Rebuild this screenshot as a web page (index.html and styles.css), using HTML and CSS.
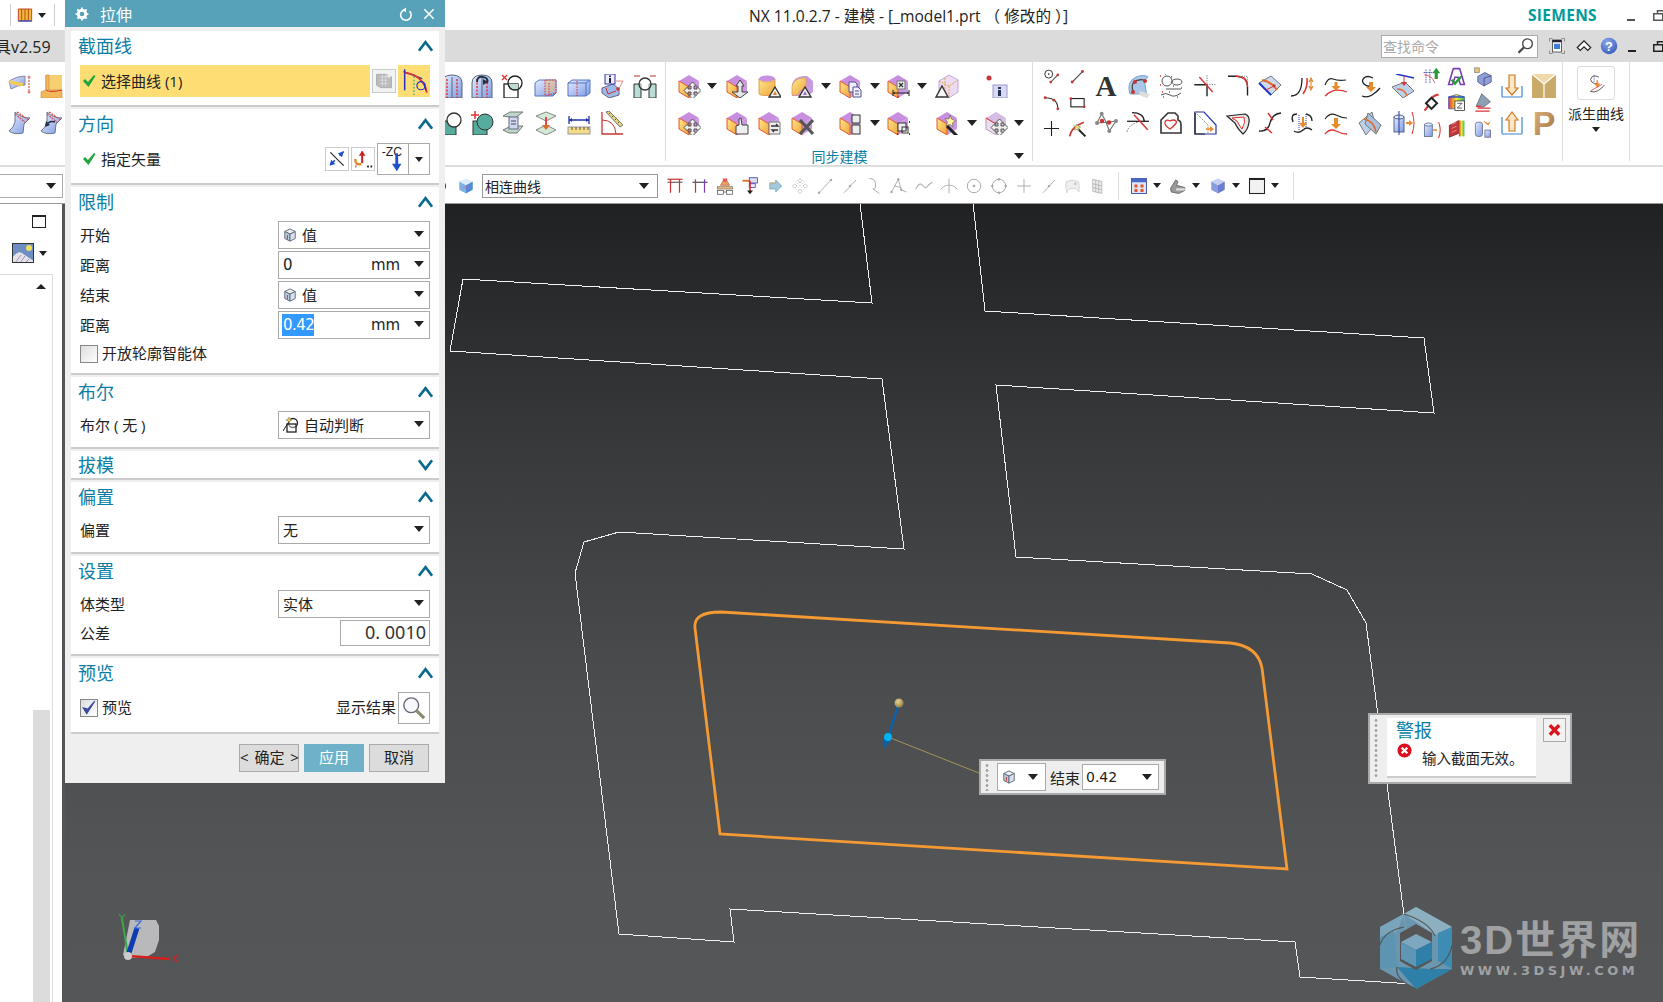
FILE: index.html
```html
<!DOCTYPE html>
<html lang="zh-CN">
<head>
<meta charset="utf-8">
<title>NX 11.0.2.7 - 建模</title>
<link rel="stylesheet" href="styles.css">
</head>
<body>
<svg class="defs" xmlns="http://www.w3.org/2000/svg">
<defs>
<linearGradient id="gy" x1="0" y1="0" x2="1" y2="1"><stop offset="0" stop-color="#ffe98a"/><stop offset="1" stop-color="#eea23c"/></linearGradient>
<linearGradient id="gb" x1="0" y1="0" x2="1" y2="1"><stop offset="0" stop-color="#e4ecff"/><stop offset="1" stop-color="#7f9be2"/></linearGradient>
<linearGradient id="gt" x1="0" y1="0" x2="1" y2="1"><stop offset="0" stop-color="#e2b884"/><stop offset="1" stop-color="#a06c38"/></linearGradient>
<linearGradient id="gr" x1="0" y1="0" x2="1" y2="0"><stop offset="0" stop-color="#e33"/><stop offset=".5" stop-color="#ee3"/><stop offset="1" stop-color="#3b5"/></linearGradient>
<radialGradient id="gball" cx=".4" cy=".35" r=".7"><stop offset="0" stop-color="#e4d596"/><stop offset="1" stop-color="#8f7c3e"/></radialGradient>
<radialGradient id="ghelp" cx=".4" cy=".3" r=".8"><stop offset="0" stop-color="#8ea9ea"/><stop offset="1" stop-color="#2f57b8"/></radialGradient>
<symbol id="cube" viewBox="0 0 24 24"><path d="M2 7l10-6 10 6-10 6z" fill="#c88fe0"/><path d="M22 7v11l-10 6V13z" fill="#c79bdf"/><path d="M2 7l10 6v11L2 18z" fill="url(#gy)" stroke="#e4572e" stroke-width="1"/></symbol>
<symbol id="move" viewBox="0 0 24 24"><path d="M15.500 8l4 4H17v3h3v-2.500l4 4-4 4V18h-3v3h2.500l-4 4-4-4H14v-3h-3v2.500l-4-4 4-4V15h3v-3h-2.500z" fill="#eee" stroke="#444" stroke-width=".9"/></symbol>
<symbol id="b1" viewBox="0 0 24 24"><use href="#cube"/><use href="#move"/></symbol>
<symbol id="b2" viewBox="0 0 24 24"><use href="#cube"/><path d="M15 6l4 6h-2v6h6l-8 6-8-6h6v-6h-2z" fill="#e6e6e6" stroke="#444"/></symbol>
<symbol id="b3" viewBox="0 0 24 24"><ellipse cx="10" cy="4.500" rx="8" ry="3" fill="#c88fe0"/><path d="M2 5v15c0 2 16 2 16 0V5c0 4-16 4-16 0z" fill="url(#gy)" stroke="#d9822b" stroke-width=".7"/><path d="M12 23l6-10 6 10z" fill="#f3f3f3" stroke="#333" stroke-width="1.400"/><path d="M16 21l2-4 2 4z" fill="#e57a2c"/></symbol>
<symbol id="b4" viewBox="0 0 24 24"><path d="M2 10q2-7 11-8h4l6 5v11l-5 4H2z" fill="#c79bdf"/><path d="M2 21v-9q3-8 11-8h3v11q-7 0-8 6z" fill="url(#gy)" stroke="#d96" stroke-width=".8"/><path d="M9 23l6-10 6 10z" fill="#eee" stroke="#333" stroke-width="1.400"/><path d="M13 21l2-4 2 4z" fill="#a66cc9"/></symbol>
<symbol id="b5" viewBox="0 0 24 24"><use href="#cube"/><path d="M11 8h6l2 2v8h-8z" fill="#eef" stroke="#558"/><path d="M15 13h5l3 3v7h-8z" fill="#eef" stroke="#558"/><path d="M17 17h4M17 20h4" stroke="#558"/></symbol>
<symbol id="b6" viewBox="0 0 24 24"><use href="#cube"/><rect x="11" y="7" width="8" height="8" fill="#eee" stroke="#777"/><path d="M13 9l4 4M17 9l-4 4" stroke="#333" stroke-width="1.300"/><path d="M7 19h16M7 16v6M23 16v6" stroke="#222"/><path d="M9 20l-2-1 2-1zM21 20l2-1-2-1z" fill="#222"/><path d="M11 23h2" stroke="#c33" stroke-width="1.500"/></symbol>
<symbol id="b7" viewBox="0 0 24 24"><path d="M4 7l10-6 9 5v12l-9 6-10-6z" fill="#ecdcf2" stroke="#c9a6d9"/><path d="M4 7l10 5 9-6M14 12v12M10 4v13" stroke="#e7a24a" fill="none" stroke-dasharray="2 1"/><path d="M1 23l6-11 6 11z" fill="#f5f5f5" stroke="#333" stroke-width="1.400"/></symbol>
<symbol id="b8" viewBox="0 0 24 24"><circle cx="5" cy="4" r="2.500" fill="#c33"/><rect x="9" y="11" width="14" height="13" fill="#d9d9f5" stroke="#99c"/><rect x="14" y="13" width="3" height="2" fill="#235"/><rect x="14" y="16" width="3" height="6" fill="#235"/></symbol>
<symbol id="b9" viewBox="0 0 24 24"><use href="#cube"/><path d="M11 23v-8l3-1V8l2-1 1 7h6v9z" fill="#eee" stroke="#444"/></symbol>
<symbol id="b10" viewBox="0 0 24 24"><use href="#cube"/><path d="M12 11h11v12H12z" fill="#eee" stroke="#777"/><path d="M14 15h7l-2-2M21 19h-6l2 2" stroke="#333" fill="none" stroke-width="1.300"/></symbol>
<symbol id="b11" viewBox="0 0 24 24"><use href="#cube"/><path d="M10 9l13 14M23 9L10 23" stroke="#555" stroke-width="3"/></symbol>
<symbol id="b12" viewBox="0 0 24 24"><use href="#cube"/><rect x="14" y="4" width="8" height="8" fill="#eee" stroke="#333"/><rect x="14" y="14" width="8" height="9" fill="#eee" stroke="#333"/></symbol>
<symbol id="b13" viewBox="0 0 24 24"><use href="#cube"/><rect x="12" y="12" width="8" height="8" fill="#eee" stroke="#333"/><rect x="16" y="16" width="6" height="6" fill="none" stroke="#333"/><path d="M11 23h1M23 23h1M23 11h1" stroke="#33a" stroke-width="2"/></symbol>
<symbol id="b14" viewBox="0 0 24 24"><use href="#cube"/><path d="M12 15l10 10" stroke="#222" stroke-width="3"/><path d="M15 4l1.500 4 4 1.500-3 2.500.5 4-3-2.500-4 1 1.500-3.500-2.500-3.500 4 .5z" fill="#fff3a0" stroke="#555" stroke-width=".6"/></symbol>
<symbol id="b15" viewBox="0 0 24 24"><path d="M2 7l10-6 10 6-10 6z" fill="#d5bce4"/><path d="M22 7v11l-10 6V13z" fill="#d8c4e6"/><path d="M2 7l10 6v11L2 18z" fill="#e9dff0" stroke="#b9a" stroke-width="1"/><path d="M2 7l10 6" stroke="#d33"/><use href="#move"/></symbol>

<symbol id="a1" viewBox="0 0 24 24"><path d="M2 24V9q0-8 10-8t10 8v15z" fill="url(#gb)" stroke="#567"/><path d="M12 3v21" stroke="#567"/><path d="M7 5v19M17 5v19" stroke="#e33" stroke-dasharray="2 1.500" stroke-width="1.500"/></symbol>
<symbol id="a2" viewBox="0 0 24 24"><use href="#a1"/><path d="M7 8q0-6 6-5t4 6" fill="none" stroke="#234" stroke-width="2"/><path d="M13 11l5-3-5-3z" fill="#234"/></symbol>
<symbol id="a3" viewBox="0 0 24 24"><rect x="3" y="10" width="14" height="14" fill="#fff" stroke="#222" stroke-width="1.300"/><rect x="8" y="10" width="9" height="6" fill="#bfdcd2"/><circle cx="14" cy="9" r="7" fill="none" stroke="#222" stroke-width="1.300"/><path d="M1 1l5 5M6 1L1 6" stroke="#d33" stroke-width="1.300"/></symbol>
<symbol id="a4" viewBox="0 0 24 24"><path d="M1 9l4-3h17v13l-3 3H1z" fill="url(#gb)" stroke="#5577c9"/><rect x="11" y="6" width="11" height="13" fill="#f4bf7a" fill-opacity=".5"/><path d="M11 6v16l11-3V6zM15 9v13" stroke="#d33" fill="none" stroke-dasharray="1.500 1.200"/></symbol>
<symbol id="a5" viewBox="0 0 24 24"><path d="M1 9l4-3h18v13l-4 3H1z" fill="url(#gb)" stroke="#5577c9"/><path d="M19 22V9l4-3M1 9h18" fill="none" stroke="#5577c9"/><path d="M10 7v15" stroke="#d33" stroke-dasharray="1.500 1.200"/></symbol>
<symbol id="a6" viewBox="0 0 24 24"><path d="M2 14l11-4 6 5v6l-10 3-7-5z" fill="#9fb8ea" stroke="#667"/><rect x="5" y="0" width="10" height="10" fill="#eef" stroke="#33a"/><rect x="9" y="1.500" width="2" height="1.500" fill="#224"/><rect x="9" y="4" width="2" height="5" fill="#224"/><path d="M15 7h8l-5 9" fill="none" stroke="#e88"/><circle cx="18" cy="15" r="1.800" fill="#c33"/><path d="M6 14l2 6 8-3" fill="none" stroke="#c33"/></symbol>
<symbol id="a7" viewBox="0 0 24 24"><path d="M1 10h7v14H1zM16 10h7v14h-7z" fill="#b9dcd6" stroke="#333"/><circle cx="12" cy="10" r="6" fill="#fff" fill-opacity=".5" stroke="#333" stroke-width="1.300"/><path d="M1 2h6M17 2h6" stroke="#c77" stroke-width="1.400"/></symbol>
<symbol id="a8" viewBox="0 0 24 24"><path d="M3 10h13v14H3z" fill="#56ad9d" stroke="#333"/><circle cx="14" cy="9" r="7" fill="#fff" stroke="#333" stroke-width="1.300"/></symbol>
<symbol id="a9" viewBox="0 0 24 24"><rect x="3" y="10" width="14" height="14" fill="#56ad9d" stroke="#333"/><circle cx="15" cy="11" r="8" fill="#56ad9d" stroke="#333"/><path d="M1 4h8M5 0v8" stroke="#d33" stroke-width="1.500"/></symbol>
<symbol id="a10" viewBox="0 0 24 24"><path d="M2 5l7-4h13l-8 6zM2 19l8-4h12l-6 7H8z" fill="#bcd8c6" stroke="#777"/><rect x="8" y="6" width="9" height="12" fill="#cfd8ee" stroke="#668"/><path d="M10 10h5M10 13h5" stroke="#446"/></symbol>
<symbol id="a11" viewBox="0 0 24 24"><path d="M2 5l10-4 10 4-10 5zM2 19l10-5 10 5-10 5z" fill="#d4ead9" stroke="#888"/><path d="M12 6v10" stroke="#e44" stroke-width="2"/><path d="M8 14h8l-4 5z" fill="#e06a2a"/></symbol>
<symbol id="a12" viewBox="0 0 24 24"><path d="M2 9h20M2 5v8M22 5v8" stroke="#2233aa" stroke-width="1.300"/><path d="M2 9l3-2v4zM22 9l-3-2v4z" fill="#2233aa"/><rect x="1" y="16" width="22" height="7" fill="#f3dd87" stroke="#999"/><path d="M5 16v3M9 16v3M13 16v3M17 16v3M21 16v3" stroke="#555"/></symbol>
<symbol id="a13" viewBox="0 0 24 24"><path d="M2 1v22h21" fill="none" stroke="#c33" stroke-width="1.300"/><path d="M2 9q13 0 14 14" fill="none" stroke="#c33"/><path d="M6 1l3-1 14 14-3 2z" fill="#e8d27a" stroke="#777"/><path d="M9 3l1-1M12 6l1-1M15 9l1-1M18 12l1-1" stroke="#555"/></symbol>

<symbol id="l1" viewBox="0 0 24 24"><path d="M1 7q8-5 16-5v9q-8 0-14 4z" fill="url(#gb)" stroke="#88a"/><path d="M1 9q6 3 14 3v-3Q8 8 1 6z" fill="#f4cb58"/><path d="M21 3v14" stroke="#c44" stroke-dasharray="2 1"/><circle cx="21" cy="3" r="1.500" fill="#d88"/><circle cx="21" cy="18" r="1.500" fill="#d88"/></symbol>
<symbol id="l2" viewBox="0 0 24 24"><rect x="5" y="1" width="17" height="15" fill="#f5cf70"/><path d="M1 24v-6q4-2 5-2V1h3v15h13v8z" fill="#f3b858" stroke="#c84" stroke-width=".6"/><path d="M6 16q4 3 16 0" stroke="#d33" fill="none"/></symbol>
<symbol id="l3" viewBox="0 0 24 24"><path d="M7 1q6 6 15 6l-6 6-1 9q-9 2-14-2 5-4 6-9z" fill="url(#gb)" stroke="#678"/><path d="M9 1l12 8M7 3l11 9" stroke="#d44" stroke-dasharray="2 1" stroke-width="1.200"/></symbol>
<symbol id="l4" viewBox="0 0 24 24"><use href="#l3"/><path d="M15 11q-6-2-9 4" stroke="#234" fill="none" stroke-width="1.600"/><path d="M6 10l-1 6 5-2z" fill="#234"/></symbol>

<symbol id="c1" viewBox="0 0 24 24"><circle cx="8.500" cy="9" r="5" fill="none" stroke="#333" stroke-width="1.200"/><circle cx="8.500" cy="9" r="1" fill="#333"/><path d="M11 19l9-9" stroke="#555" stroke-width="1.400"/><circle cx="11" cy="19" r="1.700" fill="#c33"/><circle cx="20" cy="10" r="1.700" fill="#c33"/></symbol>
<symbol id="c2" viewBox="0 0 24 24"><path d="M5.300 19L18.300 5.700" stroke="#444" stroke-width="1.400"/><circle cx="5.300" cy="19" r="1.800" fill="#c33"/><circle cx="18.300" cy="5.700" r="1.800" fill="#c33"/></symbol>
<symbol id="c3" viewBox="0 0 24 24"><path d="M4 6q16 0 16 14" fill="none" stroke="#333" stroke-width="1.400"/><circle cx="4" cy="6" r="1.800" fill="#c33"/><circle cx="15" cy="9" r="1.800" fill="#c33"/><circle cx="20" cy="20" r="1.800" fill="#c33"/></symbol>
<symbol id="c4" viewBox="0 0 24 24"><rect x="3.600" y="7" width="16.800" height="10.500" fill="#fff" stroke="#222" stroke-width="1.400"/><circle cx="3.600" cy="7" r="1.700" fill="#c33"/><circle cx="20.400" cy="17.500" r="1.700" fill="#c33"/></symbol>
<symbol id="c5" viewBox="0 0 24 24"><path d="M12 2.500v19M2.500 12h19" stroke="#222" stroke-width="1.400"/></symbol>
<symbol id="c6" viewBox="0 0 24 24"><path d="M2 22q2-12 18-18" fill="none" stroke="#c33" stroke-width="2"/><path d="M12 12l10 10" stroke="#222" stroke-width="2.500"/><path d="M11 6l2 3 3 1-2.500 2 .5 3-3-2-3 1 1-3-2-2.500 3 .5z" fill="#eedf70" stroke="#555" stroke-width=".5"/></symbol>
<symbol id="c7" viewBox="0 0 24 24"><path d="M4 20q-4-12 6-17 8-3 12 0-4 2-3 7l2 13-8-3z" fill="#a9c7e8" stroke="#7aa2d0"/><path d="M14 17l10 3-3 4-8-3z" fill="#ddd"/><path d="M7 18q-3-11 6-12 4-1 6 1" fill="none" stroke="#444" stroke-width="1.300"/><circle cx="7" cy="18" r="2" fill="#c33"/><circle cx="9" cy="8" r="2" fill="#c33"/><circle cx="19" cy="7" r="2" fill="#c33"/></symbol>
<symbol id="c8" viewBox="0 0 24 24"><circle cx="8" cy="7" r="5" fill="none" stroke="#555"/><ellipse cx="18" cy="8" rx="5" ry="3" fill="none" stroke="#555"/><path d="M7 15h15M2 21q5-3 9 0t11-2" fill="none" stroke="#555"/><path d="M1 2h1M6 0h1M12 3h1M1 11h1M14 12h1M22 14h1M3 18h1M10 18h1M18 23h1M4 23h1" stroke="#d33" stroke-width="1.500"/></symbol>
<symbol id="c9" viewBox="0 0 24 24"><path d="M1.300 10.700H14V22.300" fill="none" stroke="#222" stroke-width="1.400"/><path d="M6.300 3l13.400 15" stroke="#d33" stroke-width="1.400"/><path d="M14 10.700h9M14 1.300v9.400" stroke="#777" stroke-dasharray="1.200 1.200"/></symbol>
<symbol id="c10" viewBox="0 0 24 24"><path d="M2 2.300h8Q21.500 2.300 21.500 13v8.500" fill="none" stroke="#222" stroke-width="1.400"/><path d="M10 2.300Q21.500 2.300 21.500 13" fill="none" stroke="#d33" stroke-width="1.400"/><path d="M14 2.300h7.500V9" fill="none" stroke="#888" stroke-dasharray="1 1"/></symbol>
<symbol id="c11" viewBox="0 0 24 24"><path d="M1 9l12-7 10 9-10 10z" fill="#cfd9ec" stroke="#678"/><path d="M1 9l12 12" stroke="#2233cc" stroke-width="2"/><path d="M4 6q10 2 15 10" fill="none" stroke="#e06a2a" stroke-width="2"/><path d="M8 16l8-4" stroke="#c33"/><path d="M15 10l3 1-2 3z" fill="#c33"/></symbol>
<symbol id="c12" viewBox="0 0 24 24"><path d="M1 22q11 0 11-18" fill="none" stroke="#222" stroke-width="1.300"/><path d="M13 20q5-7 4-16" fill="none" stroke="#d33" stroke-width="1.500"/><path d="M21 14V6M19 8l2-4 2 4M19 12l2 4 2-4" fill="none" stroke="#e28a2c" stroke-width="1.200"/></symbol>
<symbol id="c13" viewBox="0 0 24 24"><path d="M1 11q3-8 8-6t13 1" fill="none" stroke="#222" stroke-width="1.200"/><path d="M1 22q9-9 22-4" fill="none" stroke="#d33" stroke-width="1.300"/><path d="M10.500 8v4h-3l4.500 5 4.500-5h-3V8z" fill="#e88a2c"/></symbol>
<symbol id="c14" viewBox="0 0 24 24"><path d="M15 4q-6-3-9 0t0 6 7 2" fill="none" stroke="#222" stroke-width="1.300"/><path d="M4 22q5 2 10-1t8-7" fill="none" stroke="#222" stroke-width="1.300"/><path d="M11 8v5H8l5 5 5-5h-3V8z" fill="#e88a2c"/></symbol>
<symbol id="c15" viewBox="0 0 24 24"><path d="M1 13l13-5 9 9-11 7z" fill="#bcd0e8" stroke="#777"/><path d="M6 15q8 0 10 7" stroke="#e06a2a" fill="none" stroke-width="1.500"/><path d="M5 0l18 4" stroke="#2233cc" stroke-width="1.500"/><path d="M13 2v7" stroke="#d33"/><path d="M10 8h6l-3 4z" fill="#d33"/></symbol>
<symbol id="c16" viewBox="0 0 24 24"><path d="M3 12L7.700 2.700 12 11l3.300 9L22 10l-7 1-12 1" fill="none" stroke="#777" stroke-width="1.200"/><circle cx="7.700" cy="2.700" r="2" fill="#888"/><circle cx="3" cy="12" r="2" fill="#888"/><circle cx="22" cy="10" r="2" fill="#888"/><circle cx="15.300" cy="20" r="2" fill="#888"/><circle cx="8" cy="10" r="2.200" fill="#c33"/><circle cx="15" cy="11.500" r="2.200" fill="#c33"/></symbol>
<symbol id="c17" viewBox="0 0 24 24"><path d="M6 1.700q12 0 12.300 9.300" fill="none" stroke="#222" stroke-width="1.200"/><path d="M1 10.300h22" stroke="#222" stroke-width="1.300"/><path d="M1 21q2-8 12-10" fill="none" stroke="#777" stroke-dasharray="1.500 1.200"/><path d="M8 3.700l13.700 15" stroke="#d33" stroke-width="1.500"/></symbol>
<symbol id="c18" viewBox="0 0 24 24"><path d="M2 22V9l7-7h7l3 3v4q3 1 3 5v8z" fill="#fff" stroke="#333" stroke-width="1.600"/><path d="M11 18q-6-4-5-7t5-1q4-2 6 0t-6 8z" fill="none" stroke="#d33" stroke-width="1.300"/></symbol>
<symbol id="c19" viewBox="0 0 24 24"><path d="M2 1h9l12 13v9H2z" fill="#fff" stroke="#2233aa" stroke-width="1.200"/><path d="M2 1v22h10" stroke="#222" stroke-width="1.200" fill="none"/><path d="M2 1l13 13v9" stroke="#888" stroke-dasharray="1.500 1" fill="none"/><path d="M13 18h5" stroke="#e88a2c" stroke-width="1.500"/><path d="M17 15l4 3-4 3z" fill="#e88a2c"/></symbol>
<symbol id="c20" viewBox="0 0 24 24"><path d="M1 5l18-2q5 2 4 8-1 8-6 12-6-6-8-11z" fill="#e8e8e8" stroke="#222" stroke-width="1.200"/><path d="M6 7l12-1q2 5-2 12-3-4-5-8z" fill="#fff" stroke="#d33"/></symbol>
<symbol id="c21" viewBox="0 0 24 24"><path d="M1 20Q10 21 12 12T23 2" fill="none" stroke="#222" stroke-width="1.300"/><path d="M10 2l5 7M7 16l7 6" stroke="#d33" stroke-width="1.500"/></symbol>
<symbol id="c22" viewBox="0 0 24 24"><path d="M3 11q-3-8 4-8M22 10q0-6-6-7M4 20q5 3 9-1t9 0" fill="none" stroke="#222" stroke-width="1.300"/><path d="M9 4v16M16 3v13" stroke="#33a" stroke-dasharray="1 1"/><path d="M12 6v6H9l4 5 4-5h-3V6z" fill="#e88a2c"/></symbol>
<symbol id="c23" viewBox="0 0 24 24"><path d="M1 8q5-7 11-4t11 3" fill="none" stroke="#222" stroke-width="1.200"/><path d="M1 23q5-6 11-3t11 3" fill="none" stroke="#d33" stroke-width="1.300"/><path d="M10 7v6H7l5 5 5-5h-3V7z" fill="#e88a2c"/></symbol>
<symbol id="c24" viewBox="0 0 24 24"><path d="M1 12L14 1l3 12L8 24z" fill="#bcd0e8" stroke="#777"/><path d="M10 2l13 12-5 9L7 13z" fill="#a9c0de" stroke="#777"/><path d="M6 8q10 2 12 13" fill="none" stroke="#e06a2a" stroke-width="1.600"/></symbol>
<symbol id="c25" viewBox="0 0 24 24"><rect x="3" y="6" width="10" height="15" fill="url(#gb)" stroke="#568"/><ellipse cx="8" cy="6" rx="5" ry="2" fill="#dfe8ff" stroke="#568"/><path d="M8 0v24" stroke="#33a"/><path d="M15 12h4" stroke="#e88a2c" stroke-width="2"/><path d="M18 9l4 3-4 3z" fill="#e88a2c"/><path d="M21 1q4 11 0 22" fill="none" stroke="#d33"/></symbol>
<symbol id="s1" viewBox="0 0 24 24"><path d="M4 2v18" stroke="#2233cc" stroke-width="1.300"/><path d="M12 8v16" stroke="#2a8" stroke-dasharray="1.500 1.500"/><path d="M3 4l16 6" stroke="#2233cc"/><path d="M4 5q13 1 18 13l1 4" fill="none" stroke="#d33" stroke-width="1.500"/><circle cx="18" cy="16" r="3.500" fill="none" stroke="#2233cc"/><path d="M21 14l1 6" stroke="#2233cc"/></symbol>
<symbol id="t1" viewBox="0 0 24 24"><path d="M2 3h20" stroke="#c33" stroke-width="1.600"/><path d="M2 7h20" stroke="#333" stroke-width="1.200"/><path d="M6 3v18M18 3v18" stroke="#c33" stroke-width="1.600"/></symbol>
<symbol id="t2" viewBox="0 0 24 24"><path d="M2 7h20" stroke="#333" stroke-width="1.400"/><path d="M6 3v18" stroke="#c33" stroke-width="1.600"/><path d="M18 3v18" stroke="#7a3db0" stroke-width="1.600"/></symbol>
<symbol id="t3" viewBox="0 0 24 24"><rect x="9" y="2" width="6" height="4" fill="#e55"/><path d="M6 11l3-5h6l3 5z" fill="#f2a455" stroke="#b55"/><rect x="2" y="13" width="20" height="3" fill="#e6c878" stroke="#866"/><rect x="2" y="18" width="8" height="5" fill="#fff" stroke="#555"/><rect x="14" y="18" width="8" height="5" fill="#fff" stroke="#555"/><path d="M10 20h4" stroke="#555"/></symbol>
<symbol id="t4" viewBox="0 0 24 24"><path d="M2 5h9" stroke="#e07020" stroke-width="2.500"/><rect x="11" y="1" width="11" height="7" fill="#dde" stroke="#33a"/><rect x="11" y="9" width="8" height="5" fill="#eef" stroke="#33a"/><path d="M12 5v14" stroke="#c22" stroke-width="2"/><path d="M8 18l4 5 4-5z" fill="#222"/></symbol>
<symbol id="t5" viewBox="0 0 24 24"><path d="M5 8h8V4l8 8-8 8v-4H5z" fill="#a5c7dc" stroke="#6fa8c4"/><path d="M5 8h8V4" stroke="#e9a548" fill="none"/></symbol>
<symbol id="g1" viewBox="0 0 24 24"><path d="M12 2l3 3-3 3-3-3zM12 16l3 3-3 3-3-3zM2 12l3-3 3 3-3 3zM16 12l3-3 3 3-3 3z" fill="none" stroke="#ccc" stroke-width="1.300"/><path d="M5 5l14 14M19 5L5 19" stroke="#ccc" stroke-dasharray="2 2"/></symbol>
<symbol id="g2" viewBox="0 0 24 24"><path d="M4 21L20 4" stroke="#aaa" stroke-width="1.200"/><circle cx="4" cy="21" r="1.700" fill="#aaa"/><circle cx="20" cy="4" r="1.700" fill="#aaa"/></symbol>
<symbol id="g3" viewBox="0 0 24 24"><path d="M4 21L20 4" stroke="#aaa" stroke-width="1.200"/><circle cx="12" cy="12" r="1.700" fill="#aaa"/></symbol>
<symbol id="g4" viewBox="0 0 24 24"><path d="M6 2q8 0 8 8t-3 6 8 6" fill="none" stroke="#aaa" stroke-width="1.300"/></symbol>
<symbol id="g5" viewBox="0 0 24 24"><path d="M2 20l9-17 4 14 7 3M6 12l9 2" fill="none" stroke="#aaa" stroke-width="1.200"/><circle cx="11" cy="3" r="1.600" fill="#aaa"/><circle cx="15" cy="17" r="1.600" fill="#aaa"/><circle cx="2" cy="20" r="1.600" fill="#aaa"/></symbol>
<symbol id="g6" viewBox="0 0 24 24"><path d="M1 16q5-10 9-5t6 2 7-6" fill="none" stroke="#aaa" stroke-width="1.400"/></symbol>
<symbol id="g7" viewBox="0 0 24 24"><path d="M12 2v20M1 17q3-6 11-6t11 6" fill="none" stroke="#aaa" stroke-width="1.200"/></symbol>
<symbol id="g8" viewBox="0 0 24 24"><circle cx="12" cy="12" r="9" fill="none" stroke="#aaa" stroke-width="1.300"/><circle cx="12" cy="12" r="1.800" fill="#aaa"/></symbol>
<symbol id="g9" viewBox="0 0 24 24"><circle cx="12" cy="12" r="9" fill="none" stroke="#aaa" stroke-width="1.300"/><circle cx="12" cy="3" r="1.600" fill="#aaa"/><circle cx="12" cy="21" r="1.600" fill="#aaa"/><circle cx="3" cy="12" r="1.600" fill="#aaa"/><circle cx="21" cy="12" r="1.600" fill="#aaa"/></symbol>
<symbol id="g10" viewBox="0 0 24 24"><path d="M12 3v18M3 12h18" stroke="#aaa" stroke-width="1.300"/></symbol>
<symbol id="g11" viewBox="0 0 24 24"><path d="M3 6q8-4 16 0 2 4 1 14-3-6-8-5-6 0-8 6-3-8-1-15z" fill="#eee" stroke="#ccc"/><circle cx="15" cy="9" r="2" fill="#ccc"/></symbol>
<symbol id="g12" viewBox="0 0 24 24"><path d="M5 3l12 3v16L5 19zM9 4v16M13 5v16M5 9l12 3M5 14l12 3" fill="#eee" stroke="#aaa"/></symbol>
<symbol id="w1" viewBox="0 0 24 24"><rect x="2" y="2" width="20" height="20" fill="#dfe6fa" stroke="#4a58a8" stroke-width="1.300"/><rect x="2" y="2" width="20" height="5" fill="#4a68c8"/><path d="M6 10h4v4H6zM14 10h4v4h-4zM6 16h4v4H6zM14 16h4v4h-4z" fill="#e0552a"/></symbol>
<symbol id="w2" viewBox="0 0 24 24"><path d="M2 15l7-11 3 2-2 5 11 3v4l-8 4-10-2z" fill="#999" stroke="#555"/><path d="M10 15h11v3H9z" fill="#ddd"/></symbol>
<symbol id="w3" viewBox="0 0 24 24"><path d="M3 6l9-4 9 4-9 5z" fill="#c6d0f2"/><path d="M3 6l9 5v11l-9-5z" fill="#8a9be0"/><path d="M21 6v11l-9 5V11z" fill="#6c7ecb"/></symbol>
<symbol id="w4" viewBox="0 0 24 24"><rect x="2" y="2" width="20" height="20" fill="#f2f2f2" stroke="#222" stroke-width="1.400"/><path d="M2 3h20" stroke="#222" stroke-width="2"/></symbol>
<symbol id="rest" viewBox="0 0 14 11"><path d="M4.500 3V.75h9V7H10" fill="none" stroke="currentColor" stroke-width="1.500"/><rect x=".75" y="3.750" width="9" height="6.500" fill="none" stroke="currentColor" stroke-width="1.500"/></symbol>
</defs>
</svg>

<header class="titlebar">
  <div class="qa">
    <span class="qa-sep"></span>
    <svg class="qa-book" viewBox="0 0 24 24"><path d="M2 3h20v18H2z" fill="#f4b83a" stroke="#c4472a" stroke-width="1.500"/><path d="M7 3v18M12 3v18M17 3v18" stroke="#b34a1c" stroke-width="1.500"/><path d="M2 21h20" stroke="#3355cc" stroke-width="2"/></svg>
    <i class="caret"></i>
    <span class="qa-sep"></span>
  </div>
  <div class="doc-title">NX 11.0.2.7 - 建模 - [_model1.prt （ 修改的 ）]</div>
  <div class="brand">SIEMENS</div>
  <span class="win-min"></span>
  <svg class="win-restore"><use href="#rest"/></svg>
</header>

<div class="band">
  <span class="tab-label">具v2.59</span>
  <label class="search"><span>查找命令</span>
    <svg viewBox="0 0 24 24"><circle cx="14" cy="9" r="6.500" fill="#fff" stroke="#444" stroke-width="1.800"/><path d="M9 14l-7 7" stroke="#444" stroke-width="3"/></svg>
  </label>
  <svg class="band-ic bi-frame" viewBox="0 0 24 24"><path d="M2 6V2h4M18 2h4v4M22 18v4h-4M6 22H2v-4" fill="none" stroke="#777"/><rect x="6" y="4" width="12" height="16" fill="#fff" stroke="#333"/><rect x="6" y="4" width="12" height="3" fill="#223"/><rect x="8" y="9" width="8" height="7" fill="#3b7fd9"/></svg>
  <svg class="band-ic bi-chev" viewBox="0 0 24 24"><path d="M3 14L12 5l9 9-4 4-5-5-5 5z" fill="#fff" stroke="#222" stroke-width="1.600"/></svg>
  <svg class="band-ic bi-help" viewBox="0 0 24 24"><circle cx="12" cy="12" r="11" fill="url(#ghelp)"/><text x="12" y="18" class="help-q">?</text></svg>
  <span class="win-min band-min"></span>
  <svg class="win-restore band-restore"><use href="#rest"/></svg>
</div>

<div class="ribbon">
  <div class="rb-left">
    <svg class="ic"><use href="#l1"/></svg><svg class="ic"><use href="#l2"/></svg>
    <svg class="ic"><use href="#l3"/></svg><svg class="ic"><use href="#l4"/></svg>
  </div>
  <div class="rb-a">
    <svg class="ic"><use href="#a1"/></svg><svg class="ic"><use href="#a2"/></svg><svg class="ic"><use href="#a3"/></svg><svg class="ic"><use href="#a4"/></svg><svg class="ic"><use href="#a5"/></svg><svg class="ic"><use href="#a6"/></svg><svg class="ic"><use href="#a7"/></svg>
    <svg class="ic"><use href="#a8"/></svg><svg class="ic"><use href="#a9"/></svg><svg class="ic"><use href="#a10"/></svg><svg class="ic"><use href="#a11"/></svg><svg class="ic"><use href="#a12"/></svg><svg class="ic"><use href="#a13"/></svg>
  </div>
  <div class="rb-b">
    <div class="rb-b-grid">
      <svg class="ic"><use href="#b1"/></svg><i class="caret"></i><svg class="ic"><use href="#b2"/></svg><svg class="ic"><use href="#b3"/></svg><svg class="ic"><use href="#b4"/></svg><i class="caret"></i><svg class="ic"><use href="#b5"/></svg><i class="caret"></i><svg class="ic"><use href="#b6"/></svg><i class="caret"></i><svg class="ic"><use href="#b7"/></svg><b></b><svg class="ic"><use href="#b8"/></svg><b></b>
      <svg class="ic"><use href="#b1"/></svg><b></b><svg class="ic"><use href="#b9"/></svg><svg class="ic"><use href="#b10"/></svg><svg class="ic"><use href="#b11"/></svg><b></b><svg class="ic"><use href="#b12"/></svg><i class="caret"></i><svg class="ic"><use href="#b13"/></svg><b></b><svg class="ic"><use href="#b14"/></svg><i class="caret"></i><svg class="ic"><use href="#b15"/></svg><i class="caret"></i>
    </div>
    <div class="rb-b-label"><span>同步建模</span><i class="caret"></i></div>
  </div>
  <div class="rb-c">
    <div class="col3"><svg class="sm"><use href="#c1"/></svg><svg class="sm"><use href="#c3"/></svg><svg class="sm"><use href="#c5"/></svg></div>
    <div class="col3"><svg class="sm"><use href="#c2"/></svg><svg class="sm"><use href="#c4"/></svg><svg class="sm"><use href="#c6"/></svg></div>
    <div class="col2"><svg class="ic"><text x="12" y="22" class="big-a">A</text></svg><svg class="ic"><use href="#c16"/></svg></div>
    <div class="col2"><svg class="ic"><use href="#c7"/></svg><svg class="ic"><use href="#c17"/></svg></div>
    <div class="col2"><svg class="ic"><use href="#c8"/></svg><svg class="ic"><use href="#c18"/></svg></div>
    <div class="col2"><svg class="ic"><use href="#c9"/></svg><svg class="ic"><use href="#c19"/></svg></div>
    <div class="col2"><svg class="ic"><use href="#c10"/></svg><svg class="ic"><use href="#c20"/></svg></div>
    <div class="col2"><svg class="ic"><use href="#c11"/></svg><svg class="ic"><use href="#c21"/></svg></div>
    <div class="col2"><svg class="ic"><use href="#c12"/></svg><svg class="ic"><use href="#c22"/></svg></div>
    <div class="col2"><svg class="ic"><use href="#c13"/></svg><svg class="ic"><use href="#c23"/></svg></div>
    <div class="col2"><svg class="ic"><use href="#c14"/></svg><svg class="ic"><use href="#c24"/></svg></div>
    <div class="col2"><svg class="ic"><use href="#c15"/></svg><svg class="ic"><use href="#c25"/></svg></div>
    <div class="col3">
      <svg class="sm" viewBox="0 0 24 24"><path d="M2 7h12M5 3v18M10 3v18" stroke="#33a" stroke-dasharray="2 1"/><path d="M3 10q9 0 13 10" fill="none" stroke="#d33"/><path d="M18 1l5 7h-3v7h-4V8h-3z" fill="#2a9a3a"/></svg>
      <svg class="sm" viewBox="0 0 24 24"><path d="M3 22q4-3 7-11t11-9" fill="none" stroke="#d33" stroke-width="2.500"/><path d="M12 6l7 7-7 7-7-7z" fill="#fff" stroke="#222" stroke-width="2.500"/></svg>
      <svg class="sm" viewBox="0 0 24 24"><rect x="3" y="7" width="10" height="15" fill="url(#gb)" stroke="#568"/><ellipse cx="8" cy="7" rx="5" ry="2" fill="#dfe8ff" stroke="#568"/><path d="M14 14h5" stroke="#e88a2c" stroke-width="2"/><path d="M21 4q4 10 0 20" fill="none" stroke="#d33" stroke-width="1.300"/></svg>
    </div>
    <div class="col3">
      <svg class="sm" viewBox="0 0 24 24"><path d="M8 2h8l6 20h-5l-3-9h-4l-3 9H2z" fill="none" stroke="#7a3db0" stroke-width="2"/><path d="M6 16l4 5 8-9" fill="none" stroke="#2a9a3a" stroke-width="3"/></svg>
      <svg class="sm" viewBox="0 0 24 24"><path d="M2 5l10-3 10 3v15H2z" fill="url(#gr)" stroke="#55a"/><path d="M2 5h20" stroke="#35c" stroke-width="2"/><rect x="10" y="10" width="12" height="12" fill="#fff" stroke="#333"/><path d="M13 13h6l-6 6h6" fill="none" stroke="#333"/></svg>
      <svg class="sm" viewBox="0 0 24 24"><path d="M3 8l12-6v16L3 23z" fill="#c23838" stroke="#822"/><path d="M6 7l6-3M6 12l6-3M6 17l6-3" stroke="#eaa"/><rect x="15" y="2" width="7" height="20" fill="url(#gr)"/></svg>
    </div>
    <div class="col3">
      <svg class="sm" viewBox="0 0 24 24"><path d="M2 1h6v6H2z" fill="#e8c770" stroke="#888"/><path d="M6 12l9-5 8 4v8l-9 5-8-5z" fill="#8d9ed9" stroke="#558"/><path d="M14 14v10M14 14l9-3" stroke="#446"/></svg>
      <svg class="sm" viewBox="0 0 24 24"><path d="M4 17L11 1l11 10-9 7z" fill="#8ca0b4" stroke="#567"/><path d="M4 17h6" stroke="#d33" stroke-width="2"/><path d="M6 19h16M3 23h18" stroke="#d33" stroke-width="1.500"/></svg>
      <svg class="sm" viewBox="0 0 24 24"><rect x="3" y="4" width="9" height="18" rx="3" fill="url(#gb)" stroke="#668"/><rect x="15" y="14" width="7" height="9" fill="url(#gb)" stroke="#668"/><path d="M14 3l5 4 2-3" fill="none" stroke="#e88a2c" stroke-width="1.500"/></svg>
    </div>
    <div class="col2"><svg class="ic" viewBox="0 0 24 24"><path d="M2 12v10q0 1 1 1h18q1 0 1-1V12" fill="none" stroke="#3a86d0" stroke-width="1.200"/><path d="M9 1h6v13h3l-6 7-6-7h3z" fill="#fbe7c8" stroke="#d27a1f" stroke-width="1.200"/></svg><svg class="ic" viewBox="0 0 24 24"><path d="M2 6v16q0 1 1 1h18q1 0 1-1V6" fill="none" stroke="#3a86d0" stroke-width="1.200"/><path d="M9 20V9H6l6-8 6 8h-3v11z" fill="#fbe7c8" stroke="#d27a1f" stroke-width="1.200"/></svg></div>
    <div class="col2"><svg class="ic" viewBox="0 0 24 24"><rect width="24" height="24" fill="#c9aa68"/><path d="M0 0l12 10L24 0z" fill="#efd9a8"/><path d="M0 0l12 10v14M24 0L12 10" stroke="#fff" stroke-width="1.200" fill="none"/></svg><svg class="ic"><text x="12" y="24" class="big-p">P</text></svg></div>
  </div>
  <div class="rb-d">
    <div class="derive-btn"><svg class="sm" viewBox="0 0 24 24"><path d="M15 4q-6-3-9 0t0 6 7 2M4 22q5 2 10-1t8-7" fill="none" stroke="#333"/><path d="M9 1v10" stroke="#33a" stroke-dasharray="1 1"/><path d="M12 8v4H9l4 5 4-5h-3V8z" fill="#e88a2c"/><path d="M5 21l14-8" stroke="#d33"/></svg></div>
    <span>派生曲线</span>
    <i class="caret"></i>
  </div>
</div>

<div class="selbar">
  <div class="left-combo"><i class="caret"></i></div>
  <div class="sel-middle">
    <svg class="sel-cut" viewBox="0 0 24 24"><circle cx="4" cy="12" r="9" fill="none" stroke="#444" stroke-width="2"/></svg>
    <svg class="sel-cube" viewBox="0 0 24 24"><path d="M3 6l9-4 9 4-9 5z" fill="#dfeafa"/><path d="M3 6l9 5v11l-9-5z" fill="#7cb2e6"/><path d="M21 6v11l-9 5V11z" fill="#4f8ed4"/><path d="M12 11v6M7 14l10 0" stroke="#e58" stroke-dasharray="1 1"/></svg>
    <div class="combo"><span>相连曲线</span><i class="caret"></i></div>
  </div>
  <div class="sel-icons">
    <svg class="st"><use href="#t1"/></svg><svg class="st"><use href="#t2"/></svg><svg class="st"><use href="#t3"/></svg><svg class="st"><use href="#t4"/></svg><svg class="st"><use href="#t5"/></svg>
    <svg class="st"><use href="#g1"/></svg><svg class="st"><use href="#g2"/></svg><svg class="st"><use href="#g3"/></svg><svg class="st"><use href="#g4"/></svg><svg class="st"><use href="#g5"/></svg><svg class="st"><use href="#g6"/></svg><svg class="st"><use href="#g7"/></svg><svg class="st"><use href="#g8"/></svg><svg class="st"><use href="#g9"/></svg><svg class="st"><use href="#g10"/></svg><svg class="st"><use href="#g3"/></svg><svg class="st"><use href="#g11"/></svg><svg class="st"><use href="#g12"/></svg>
  </div>
  <div class="sel-view">
    <div class="vw"><svg><use href="#w1"/></svg><i class="caret"></i></div>
    <div class="vw"><svg><use href="#w2"/></svg><i class="caret"></i></div>
    <div class="vw"><svg><use href="#w3"/></svg><i class="caret"></i></div>
    <div class="vw"><svg><use href="#w4"/></svg><i class="caret"></i></div>
  </div>
</div>

<main class="main">
  <aside class="rail">
    <div class="rail-win"><span class="win-box"></span></div>
    <div class="rail-img">
      <svg viewBox="0 0 22 20"><rect width="22" height="20" fill="#6d8fc4"/><circle cx="17" cy="5" r="3" fill="#f0e060"/><path d="M0 15q6-8 10-5t12 8v2H0z" fill="#e6e2ea"/><path d="M3 20l6-8M8 20l5-7M13 20l4-4" stroke="#9a94b0"/><rect x=".5" y=".5" width="21" height="19" fill="none" stroke="#333"/></svg>
      <i class="caret"></i>
    </div>
    <div class="tree">
      <i class="caret caret-up"></i>
      <div class="thumb"></div>
    </div>
  </aside>

  <section class="viewport">
    <svg class="scene" viewBox="62 203 1601 799" xmlns="http://www.w3.org/2000/svg">
      <path class="edge" d="M860 203L872 303 463 279 450 351 882 379 904 549 619 532 584 542 575 573 619 934 734 942 730 909 1295 942 1300 977 1413 984 1366 623 1347 590 1312 574 1016 557 996 385 1434 413 1424 338 985 311 973 203"/>
      <path class="section" d="M721 612L1230 643Q1258 646 1262 668L1287 869 720 834 695 628Q693 612 721 612Z"/>
      <path class="leader" d="M888 737L979 773"/>
      <path class="vec" d="M899 703L888 737"/>
      <path class="cone" d="M884 738h8l-8 11z"/>
      <circle class="ball" cx="899" cy="703" r="4.500"/>
      <circle class="dot" cx="888" cy="737" r="4"/>
      <path class="tri-box" d="M130 920h26l3 6 0 14-4 12-10 6h-18l-4-3z"/>
      <path class="tri-x" d="M128 956l42 3"/>
      <path class="tri-y" d="M128 956l-6-38"/>
      <path class="tri-z" d="M128 956l9-28"/>
      <path class="lbl-z" d="M135 921h6l-6 7h6"/>
      <path class="lbl-y" d="M119 914l3 4 3-4M122 918v4"/>
      <path class="lbl-x" d="M173 955l4 7M177 955l-4 7"/>
      <circle class="tri-o" cx="128" cy="956" r="4"/>
    </svg>
    <div class="mark">
      <svg class="mark-hex" viewBox="0 0 72 82">
        <path d="M36 0L72 20V62L36 82 0 62V20z" fill="#6b9ab4" fill-opacity=".95"/>
        <path d="M36 0L72 20 55 28 24 7z" fill="#8db0c1"/>
        <path d="M72 20V62L58 54V26z" fill="#3c8cb4"/>
        <path d="M72 62L36 82 17 60 50 62z" fill="#2f80a8"/>
        <path d="M0 20L24 7 18 22 0 45z" fill="#7aa4ba"/>
        <path d="M0 62V30L14 24 17 60z" fill="#5c94b2"/>
        <path d="M24 7q25 8 31 22M72 38q-4 20-22 24M36 82Q14 72 17 60M0 38q4-14 24-18" fill="none" stroke="#555" stroke-width="1.200"/>
        <path d="M20 26L36 17 52 26V54L36 63 20 54z" fill="#555"/>
        <path d="M21 35L36 27 52 35 36 43z" fill="#7ea8bf"/>
        <path d="M21 35L36 43V60L21 52z" fill="#5d97b5"/>
        <path d="M52 35V52L36 60V43z" fill="#2f80a8"/>
      </svg>
      <div class="mark-text"><div class="mark-name">3D世界网</div><div class="mark-url">WWW.3DSJW.COM</div></div>
    </div>
  </section>
</main>

<aside class="dialog">
  <header class="dlg-title">
    <svg class="dlg-gear" viewBox="0 0 24 24"><circle cx="12" cy="12" r="6.500" fill="none" stroke="#fff" stroke-width="5"/><path d="M12 1v4M12 19v4M1 12h4M19 12h4M4 4l3 3M17 17l3 3M20 4l-3 3M7 17l-3 3" stroke="#fff" stroke-width="3"/></svg>
    <span class="dlg-name">拉伸</span>
    <svg class="dlg-btn" viewBox="0 0 24 24"><path d="M9 5a9 9 0 1 0 9 2" fill="none" stroke="#fff" stroke-width="2.600"/><path d="M12 1l-6 4 6 4z" fill="#fff"/></svg>
    <svg class="dlg-btn" viewBox="0 0 24 24"><path d="M4 4l16 16M20 4L4 20" stroke="#fff" stroke-width="2.600"/></svg>
  </header>
  <div class="dlg-body">
    <section class="panel">
      <div class="p-head"><h3>截面线</h3><svg class="chev" viewBox="0 0 16 12"><path d="M1 11l7-9 7 9" /></svg></div>
      <div class="p-body row-select">
        <div class="sel-field"><svg class="tick" viewBox="0 0 14 14"><path d="M1 7l2-2 3 3 6-7 1.500 1-7 11z"/></svg><span>选择曲线 (1)</span></div>
        <div class="sq sq-grey"><svg viewBox="0 0 24 24"><path d="M3 4h11l7 3v13H8l-5-3z" fill="#bbb" stroke="#aaa"/><path d="M7 7h9M7 11h9M7 15h9M10 4v14M14 4v14" stroke="#ddd"/><path d="M18 2l1 3 3 1-3 1-1 3-1-3-3-1 3-1z" fill="#eee"/></svg></div>
        <div class="sq-yellow"><svg viewBox="0 0 24 24"><use href="#s1"/></svg></div>
      </div>
    </section>
    <section class="panel">
      <div class="p-head"><h3>方向</h3><svg class="chev" viewBox="0 0 16 12"><path d="M1 11l7-9 7 9" /></svg></div>
      <div class="p-body row-dir">
        <svg class="tick" viewBox="0 0 14 14"><path d="M1 7l2-2 3 3 6-7 1.500 1-7 11z"/></svg><span class="dir-label">指定矢量</span>
        <div class="sq"><svg viewBox="0 0 24 24"><path d="M4 4l16 16" stroke="#222" stroke-width="1.300"/><path d="M20 3L3 20" stroke="#1e50c8" stroke-width="2" stroke-dasharray="7 8"/><path d="M20 3l-7 2 5 5zM3 20l7-2-5-5z" fill="#1e50c8"/></svg></div>
        <div class="sq"><svg viewBox="0 0 24 24"><path d="M11 3v14" stroke="#c22" stroke-width="2.400"/><path d="M7 8l4-6 4 6z" fill="#c22"/><path d="M10 18q-8 2-7-6" fill="none" stroke="#e88a2c" stroke-width="3"/><path d="M3 21h1M17 21h2M21 21h2" stroke="#222" stroke-width="2.400"/></svg></div>
        <div class="vec-combo">
          <div class="vc-main"><svg viewBox="0 0 30 32"><text x="3" y="13" class="zc">-ZC</text><path d="M19 10v13" stroke="#1e50c8" stroke-width="3"/><path d="M14 21l5 8 5-8z" fill="#1e50c8"/></svg></div>
          <div class="vc-drop"><i class="caret"></i></div>
        </div>
      </div>
    </section>
    <section class="panel">
      <div class="p-head"><h3>限制</h3><svg class="chev" viewBox="0 0 16 12"><path d="M1 11l7-9 7 9" /></svg></div>
      <div class="p-body rows">
        <div class="row"><label>开始</label><div class="field"><svg class="val-ic" viewBox="0 0 16 16"><path d="M2 4l6-3 6 3-6 3z" fill="#eee" stroke="#567"/><path d="M2 4l6 3v8l-6-3z" fill="#bcd" stroke="#567"/><path d="M14 4v8l-6 3V7z" fill="#dde" stroke="#567"/><path d="M5 13V8" stroke="#c22"/></svg><span>值</span><i class="caret"></i></div></div>
        <div class="row"><label>距离</label><div class="field"><span class="num">0</span><span class="unit">mm</span><i class="caret"></i></div></div>
        <div class="row"><label>结束</label><div class="field"><svg class="val-ic" viewBox="0 0 16 16"><path d="M2 4l6-3 6 3-6 3z" fill="#eee" stroke="#567"/><path d="M2 4l6 3v8l-6-3z" fill="#bcd" stroke="#567"/><path d="M14 4v8l-6 3V7z" fill="#dde" stroke="#567"/><path d="M5 13V8" stroke="#c22"/></svg><span>值</span><i class="caret"></i></div></div>
        <div class="row"><label>距离</label><div class="field"><span class="num sel-num">0.42</span><span class="unit">mm</span><i class="caret"></i></div></div>
        <div class="check-row"><span class="check"></span><span class="check-text">开放轮廓智能体</span></div>
      </div>
    </section>
    <section class="panel">
      <div class="p-head"><h3>布尔</h3><svg class="chev" viewBox="0 0 16 12"><path d="M1 11l7-9 7 9" /></svg></div>
      <div class="p-body rows">
        <div class="row"><label>布尔 ( 无 )</label><div class="field"><svg class="val-ic val-bool" viewBox="0 0 16 16"><circle cx="10" cy="6" r="4.500" fill="#fff" stroke="#222" stroke-width="1.300"/><rect x="4" y="7" width="9" height="8" fill="#fff" fill-opacity=".4" stroke="#222" stroke-width="1.300"/><path d="M0 14L5 6" stroke="#222"/><path d="M6 0l1 2 2 1-2 1-1 2-1-2-2-1 2-1z" fill="#e8c84a" stroke="#555" stroke-width=".4"/></svg><span>自动判断</span><i class="caret"></i></div></div>
      </div>
    </section>
    <section class="panel panel-closed">
      <div class="p-head"><h3>拔模</h3><svg class="chev" viewBox="0 0 16 12"><path d="M1 1l7 9 7-9" /></svg></div>
    </section>
    <section class="panel">
      <div class="p-head"><h3>偏置</h3><svg class="chev" viewBox="0 0 16 12"><path d="M1 11l7-9 7 9" /></svg></div>
      <div class="p-body rows">
        <div class="row"><label>偏置</label><div class="field"><span>无</span><i class="caret"></i></div></div>
      </div>
    </section>
    <section class="panel">
      <div class="p-head"><h3>设置</h3><svg class="chev" viewBox="0 0 16 12"><path d="M1 11l7-9 7 9" /></svg></div>
      <div class="p-body rows">
        <div class="row"><label>体类型</label><div class="field"><span>实体</span><i class="caret"></i></div></div>
        <div class="row row-tol"><label>公差</label><div class="tol">0. 0010</div></div>
      </div>
    </section>
    <section class="panel">
      <div class="p-head"><h3>预览</h3><svg class="chev" viewBox="0 0 16 12"><path d="M1 11l7-9 7 9" /></svg></div>
      <div class="p-body row-preview">
        <div class="check-row2"><span class="check check-on"><svg viewBox="0 0 14 14"><path d="M2 7l3 5 7-11-6 7z"/></svg></span><span class="check-text">预览</span></div>
        <div class="show"><span class="check-text">显示结果</span><div class="lens"><svg viewBox="0 0 26 26"><circle cx="10" cy="10" r="8" fill="#f6f8fb" stroke="#667" stroke-width="1.500"/><path d="M16 16l8 8" stroke="#8a8a70" stroke-width="3.500"/></svg></div></div>
      </div>
    </section>
  </div>
  <footer class="dlg-foot">
    <button class="btn">&lt; 确定 &gt;</button>
    <button class="btn btn-primary">应用</button>
    <button class="btn">取消</button>
  </footer>
</aside>

<div class="float-end">
  <span class="grip"></span>
  <div class="fe-type"><svg class="val-ic" viewBox="0 0 16 16"><path d="M2 4l6-3 6 3-6 3z" fill="#eee" stroke="#567"/><path d="M2 4l6 3v8l-6-3z" fill="#bcd" stroke="#567"/><path d="M14 4v8l-6 3V7z" fill="#dde" stroke="#567"/><path d="M5 13V8" stroke="#c22"/></svg><i class="caret"></i></div>
  <span class="fe-label">结束</span>
  <div class="fe-val"><span>0.42</span><i class="caret"></i></div>
</div>

<div class="alert">
  <span class="grip"></span>
  <div class="alert-box">
    <h3>警报</h3>
    <div class="alert-msg">
      <svg viewBox="0 0 16 16"><circle cx="8" cy="8" r="7.500" fill="#dc0f1e"/><path d="M5 5l6 6M11 5l-6 6" stroke="#fff" stroke-width="2.400"/></svg>
      <span>输入截面无效。</span>
    </div>
  </div>
  <div class="alert-x"><svg viewBox="0 0 16 16"><path d="M3 3l10 10M13 3L3 13" stroke="#d8141e" stroke-width="3.600"/></svg></div>
</div>
</body>
</html>
```

FILE: styles.css
```css
* { box-sizing: border-box; }
html, body { margin: 0; padding: 0; height: 100%; }
body {
  width: 1663px; height: 1002px; overflow: hidden;
  display: flex; flex-direction: column; background: #fff; position: relative;
  font-family: "Open Sans", "Noto Sans CJK SC", sans-serif; font-size: 15px; color: #222;
}
.defs { position: absolute; width: 0; height: 0; }
.caret { display: block; width: 0; height: 0; flex: none; border-left: 5px solid transparent; border-right: 5px solid transparent; border-top: 6px solid #222; }

/* title bar */
.titlebar { height: 30px; flex: none; display: flex; align-items: center; background: #fff; }
.qa { width: 749px; flex: none; display: flex; align-items: center; padding-left: 10px; }
.qa-sep { width: 1px; height: 22px; background: #ccc; }
.qa-book { width: 16px; height: 16px; margin-left: 6px; }
.qa .caret { margin-left: 5px; margin-right: 8px; border-left-width: 4px; border-right-width: 4px; border-top-width: 5px; }
.doc-title { font-size: 15.600px; color: #222; white-space: nowrap; }
.brand { margin-left: auto; font-weight: 700; font-size: 15.500px; letter-spacing: .3px; color: #009a9b; width: 69px; white-space: nowrap; }
.win-min { width: 8px; height: 2px; background: #555; margin: 10px 0 0 30px; flex: none; }
.win-restore { width: 14px; height: 11px; margin: 0 -4px 0 18px; flex: none; color: #555; display: block; }

/* gray band */
.band { height: 32px; flex: none; background: #dbdbdb; display: flex; align-items: center; overflow: hidden; }
.tab-label { margin-left: -5px; font-size: 16px; white-space: nowrap; }
.search { margin-left: auto; width: 157px; height: 23px; background: #fff; border: 1px solid #aaa; display: flex; align-items: center; justify-content: space-between; padding: 0 2px 0 1px; font-size: 14px; color: #aaa; }
.search svg { width: 18px; height: 18px; }
.band-ic { width: 18px; height: 18px; flex: none; }
.bi-frame { margin-left: 10px; }
.bi-chev { margin-left: 9px; }
.bi-help { margin-left: 7px; }
.help-q { font: 700 17px "Liberation Sans", sans-serif; fill: #fff; text-anchor: middle; }
.band-min { margin-left: 10px; background: #222; }
.band-restore { margin-left: 17px; color: #222; }

/* ribbon */
.ribbon { height: 105px; flex: none; display: flex; background: #fff; border-bottom: 2px solid #ddd; }
.ic { width: 24px; height: 24px; display: block; justify-self: center; align-self: center; flex: none; overflow: visible; }
.sm { width: 19px; height: 19px; display: block; flex: none; overflow: visible; }
.rb-left { width: 437px; flex: none; display: grid; grid-template-columns: 32px 32px; grid-template-rows: 37px 37px; padding: 5px 0 0 4px; align-content: start; }
.rb-a { width: 229px; flex: none; display: grid; grid-template-columns: 30px 29px repeat(5, 33px); grid-template-rows: 37px 37px; padding-top: 5px; border-right: 1px solid #ddd; margin-bottom: 4px; align-content: start; }
.rb-b { width: 367px; flex: none; padding: 5px 0 0 9px; border-right: 1px solid #ddd; margin-bottom: 4px; display: flex; flex-direction: column; }
.rb-b-grid { display: grid; grid-template-columns: 28px 18px 32px 32px 34px 14px 34px 16px 30px 18px 32px 18px 30px 16px; grid-template-rows: 37px 37px; justify-items: center; align-items: center; }
.rb-b-label { position: relative; display: flex; justify-content: center; color: #0a7ea4; font-size: 14px; margin-top: 6px; padding-right: 28px; align-items: center; height: 18px; }
.rb-b-label .caret { position: absolute; right: 8px; top: 6px; }
.rb-c { width: 530px; flex: none; display: grid; padding: 0 0 0 6px; border-right: 1px solid #ddd; margin-bottom: 4px; grid-template-columns: 25px 26px 31px 33px 34px 33px 33px 31px 33px 35px 34px 31px 26px 25px 27px 32px 32px; }
.col2 { display: flex; flex-direction: column; align-items: center; padding-top: 12px; gap: 13px; }
.col3 { display: flex; flex-direction: column; align-items: center; padding-top: 5px; gap: 7px; }
.big-a { font: 700 29px "Liberation Serif", serif; fill: #333; text-anchor: middle; }
.big-p { font: 700 34px "Liberation Sans", sans-serif; fill: url(#gt); text-anchor: middle; }
.rb-d { width: 67px; flex: none; border-right: 1px solid #ddd; margin-bottom: 4px; display: flex; flex-direction: column; align-items: center; padding-top: 4px; font-size: 14px; }
.derive-btn { width: 38px; height: 34px; border: 1px solid #ddd; border-radius: 3px; display: flex; align-items: center; justify-content: center; margin-bottom: 4px; }
.rb-d span { line-height: 20px; white-space: nowrap; }
.rb-d .caret { margin-top: 3px; border-left-width: 4px; border-right-width: 4px; border-top-width: 5px; }

/* selection bar */
.selbar { height: 37px; flex: none; display: flex; align-items: center; background: #fff; border-bottom: 1px solid #999; padding-top: 1px; }
.left-combo { width: 63px; height: 24px; flex: none; border: 1px solid #aaa; border-left: 0; display: flex; align-items: center; justify-content: flex-end; padding-right: 6px; }
.sel-middle { width: 595px; flex: none; display: flex; align-items: center; justify-content: flex-end; }
.sel-cut { width: 14px; height: 14px; margin-right: 5px; }
.sel-cube { width: 18px; height: 18px; margin-right: 7px; }
.combo { width: 176px; height: 24px; border: 1px solid #999; display: flex; align-items: center; justify-content: space-between; padding: 0 8px 0 2px; font-size: 14px; }
.sel-icons { display: flex; margin-left: 5px; padding-right: 7px; border-right: 1px solid #ddd; height: 28px; align-items: center; }
.st { width: 18px; height: 18px; margin: 0 3.450px; flex: none; display: block; }
.sel-view { display: flex; padding-left: 11px; padding-right: 5px; border-right: 1px solid #ddd; height: 28px; align-items: center; }
.vw { width: 39.500px; display: flex; align-items: center; }
.vw svg { width: 18px; height: 18px; }
.vw .caret { margin-left: 5px; border-left-width: 4px; border-right-width: 4px; border-top-width: 5px; }

/* main */
.main { flex: 1; display: flex; min-height: 0; }
.rail { width: 62px; flex: none; background: #fff; display: flex; flex-direction: column; }
.rail-win { height: 35px; padding: 11px 0 0 32px; }
.win-box { display: block; width: 14px; height: 13px; border: 1.500px solid #222; border-top-width: 2.500px; }
.rail-img { display: flex; align-items: center; padding-left: 12px; height: 24px; margin-top: 2px; gap: 5px; }
.rail-img svg { width: 22px; height: 20px; }
.rail-img .caret { border-left-width: 4px; border-right-width: 4px; border-top-width: 5px; }
.tree { width: 53px; flex: 1; margin-top: 9px; border-top: 1px solid #ddd; border-right: 1px solid #ddd; display: flex; flex-direction: column; align-items: flex-end; padding-top: 9px; }
.caret-up { border-top: 0; border-bottom: 5px solid #222; margin-right: 6px; }
.thumb { width: 17px; height: 292px; margin-top: auto; background: #dcdcdc; margin-right: 2px; }
.viewport { flex: 1; position: relative; overflow: hidden; border-left: 3px solid #555; background: linear-gradient(#202122 0, #38393b 30%, #4b4c4e 60%, #545557 85%, #555658 100%); }
.scene { position: absolute; left: -3px; top: -1px; width: 1601px; height: 799px; }
.edge { fill: none; stroke: #f2f2f2; stroke-width: 1; shape-rendering: crispEdges; }
.section { fill: none; stroke: #f59a33; stroke-width: 2.800; }
.leader { stroke: #a4945a; stroke-width: 1; fill: none; }
.vec { stroke: #0862b2; stroke-width: 2.400; }
.cone { fill: #0862b2; }
.ball { fill: url(#gball); }
.dot { fill: #00b4f0; }
.tri-box { fill: #b9b9bb; }
.tri-x { stroke: #d2201e; stroke-width: 2.400; }
.tri-y { stroke: #3aa648; stroke-width: 2; }
.tri-z { stroke: #0c3cb0; stroke-width: 5; }
.lbl-z { stroke: #3a6fd8; fill: none; stroke-width: 1.200; }
.lbl-y { stroke: #3aa648; fill: none; stroke-width: 1.200; }
.lbl-x { stroke: #c22; fill: none; stroke-width: 1.200; }
.tri-o { fill: #ccc; }

/* watermark */
.mark { position: absolute; left: 1315px; top: 703px; display: flex; gap: 8px; align-items: center; }
.mark-hex { width: 72px; height: 82px; }
.mark-text { color: #a0a1a3; padding-top: 3px; }
.mark-name { font: 700 40px/38px "Liberation Sans", "Noto Sans CJK SC", sans-serif; letter-spacing: 2px; white-space: nowrap; }
.mark-url { font: 700 13px/14px "DejaVu Sans", sans-serif; letter-spacing: 3.500px; margin-top: 5px; white-space: nowrap; }

/* dialog */
.dialog { position: absolute; left: 65px; top: 0; width: 380px; height: 783px; background: #efefef; display: flex; flex-direction: column; }
.dlg-title { height: 27px; flex: none; background: #57a1b9; display: flex; align-items: center; color: #fff; padding: 0 9px 0 10px; }
.dlg-gear { width: 14px; height: 14px; }
.dlg-name { font-size: 16px; margin-left: 11px; }
.dlg-btn { width: 14px; height: 14px; margin-left: 9px; }
.dlg-name + .dlg-btn { margin-left: auto; }
.dlg-body { padding: 4px 6px 0; display: flex; flex-direction: column; gap: 2px; }
.panel { background: #fff; border-bottom: 2px solid #ccc; }
.p-head { height: 30px; display: flex; align-items: center; justify-content: space-between; padding: 0 6px 0 7px; }
.panel-closed .p-head { height: 27px; }
.p-head h3 { margin: 0; font-size: 18px; font-weight: 400; color: #0a7ea4; line-height: 24px; }
.chev { width: 15px; height: 12px; fill: none; stroke: #0a6a8c; stroke-width: 2.800; }
.p-body { padding: 4px 9px 8px; }
.row-select { display: flex; align-items: center; }
.sel-field { width: 290px; height: 32px; background: #ffdd75; display: flex; align-items: center; padding-left: 2px; gap: 5px; }
.sel-field span { padding-bottom: 2px; }
.tick { width: 14px; height: 14px; fill: #1ea53c; flex: none; }
.sq { width: 24px; height: 24px; background: #fff; border: 1px solid #ccc; flex: none; margin-left: 2px; padding: 1px; }
.sq svg { display: block; width: 100%; height: 100%; }
.sq-grey { background: #f2f2f2; }
.sq-yellow { width: 32px; height: 32px; background: #ffdd75; margin-left: 2px; padding: 2px; flex: none; }
.sq-yellow svg { display: block; width: 28px; height: 28px; }
.row-dir { display: flex; align-items: center; box-sizing: content-box; height: 32px; }
.row-dir .tick { margin-left: 2px; margin-right: 5px; }
.dir-label { margin-right: auto; padding-bottom: 2px; }
.vec-combo { width: 53px; height: 32px; border: 1px solid #aaa; display: flex; margin-left: 2px; flex: none; }
.vc-main { flex: 1; }
.vc-main svg { display: block; width: 30px; height: 30px; }
.zc { font: 400 13px "Liberation Sans", sans-serif; fill: #222; }
.vc-drop { width: 21px; border-left: 1px solid #aaa; display: flex; align-items: center; justify-content: center; }
.vc-drop .caret { border-left-width: 4px; border-right-width: 4px; border-top-width: 5px; }
.rows { display: flex; flex-direction: column; gap: 2px; }
.row { display: flex; align-items: center; justify-content: space-between; }
.row label { white-space: nowrap; padding-bottom: 2px; }
.field { width: 152px; height: 28px; border: 1.500px solid #aaa; display: flex; align-items: center; padding: 0 5px 0 4px; background: #fff; position: relative; gap: 5px; }
.field > span { padding-bottom: 1px; }
.field .caret { position: absolute; right: 5px; top: 9px; }
.val-ic { width: 14px; height: 14px; flex: none; }
.val-bool { width: 16px; height: 16px; }
.field > .num { font: 400 15px "DejaVu Sans", sans-serif; padding-bottom: 0; }
.field > .sel-num { background: #3399ff; color: #fff; padding: 0 0 0 1px; margin-left: -1px; line-height: 22px; letter-spacing: -.5px; }
.field > .unit { position: absolute; left: 92px; top: 4px; font: 400 15px/18px "DejaVu Sans", sans-serif; padding: 0; }
.check-row { display: flex; align-items: center; gap: 4px; margin-top: 4px; height: 18px; margin-bottom: 2px; }
.check-text { padding-bottom: 3px; }
.check { width: 18px; height: 18px; border: 1.500px solid #888; background: linear-gradient(135deg, #ddd, #fff); display: block; flex: none; }
.check svg { display: block; width: 100%; height: 100%; fill: #3a4a9c; stroke: #3a4a9c; }
.row-tol { height: 26px; }
.tol { width: 90px; height: 26px; border: 1.500px solid #aaa; text-align: right; padding-right: 3px; font: 400 18px/23px "Noto Sans", sans-serif; color: #333; }
.row-preview { display: flex; justify-content: space-between; align-items: center; }
.check-row2 { display: flex; align-items: center; gap: 4px; }
.show { display: flex; align-items: center; gap: 2px; }
.lens { width: 32px; height: 32px; border: 1.500px solid #aaa; padding: 3px; }
.lens svg { display: block; width: 100%; height: 100%; }
.dlg-foot { display: flex; justify-content: flex-end; gap: 5px; padding: 10px 16px 0 0; }
.btn { width: 60px; height: 28px; border: 1.500px solid #aaa; background: #dcdcdc; font: 400 15px/22px "Open Sans", "Noto Sans CJK SC", sans-serif; color: #222; padding: 0 0 2px; white-space: nowrap; word-spacing: 2px; }
.btn-primary { background: #6eb1c9; border-color: #6eb1c9; color: #fff; }

/* floating widgets */
.grip { width: 6px; align-self: stretch; flex: none; background-image: radial-gradient(#aaa 1.400px, transparent 1.600px); background-size: 6px 5px; }
.float-end { position: absolute; left: 979px; top: 759px; width: 187px; height: 36px; background: #eee; border: 2px solid #aaa; display: flex; align-items: center; padding: 2px 5px 2px 3px; }
.float-end .grip { margin-right: 7px; }
.fe-type { width: 49px; height: 28px; background: #fff; border: 1px solid #aaa; display: flex; align-items: center; justify-content: space-between; padding: 0 7px 0 4px; flex: none; }
.fe-label { margin: 0 2px 0 4px; white-space: nowrap; }
.fe-val { flex: 1; height: 26px; background: #fff; border: 1px solid #aaa; display: flex; align-items: center; justify-content: space-between; padding: 0 6px 0 3px; font-family: "DejaVu Sans", sans-serif; font-size: 14px; }
.alert { position: absolute; left: 1368px; top: 713px; width: 204px; height: 71px; background: #eee; border: 2px solid #aaa; display: flex; padding: 3px 4px 4px 3px; }
.alert .grip { margin-right: 8px; }
.alert-box { width: 149px; background: #fff; border-bottom: 2px solid #ccc; padding-left: 9px; flex: none; }
.alert-box h3 { margin: 0; font-size: 18px; font-weight: 400; color: #0a7ea4; line-height: 24px; }
.alert-msg { display: flex; gap: 10px; font-size: 14.500px; line-height: 20px; }
.alert-msg svg { width: 15px; height: 15px; margin-top: 1px; margin-left: 1px; flex: none; }
.alert-msg span { margin-top: 7px; white-space: nowrap; }
.alert-x { width: 24px; height: 24px; margin-left: 7px; border: 1px solid #aaa; background: #f2f2f2; padding: 3px; }
.alert-x svg { display: block; width: 100%; height: 100%; }
```
